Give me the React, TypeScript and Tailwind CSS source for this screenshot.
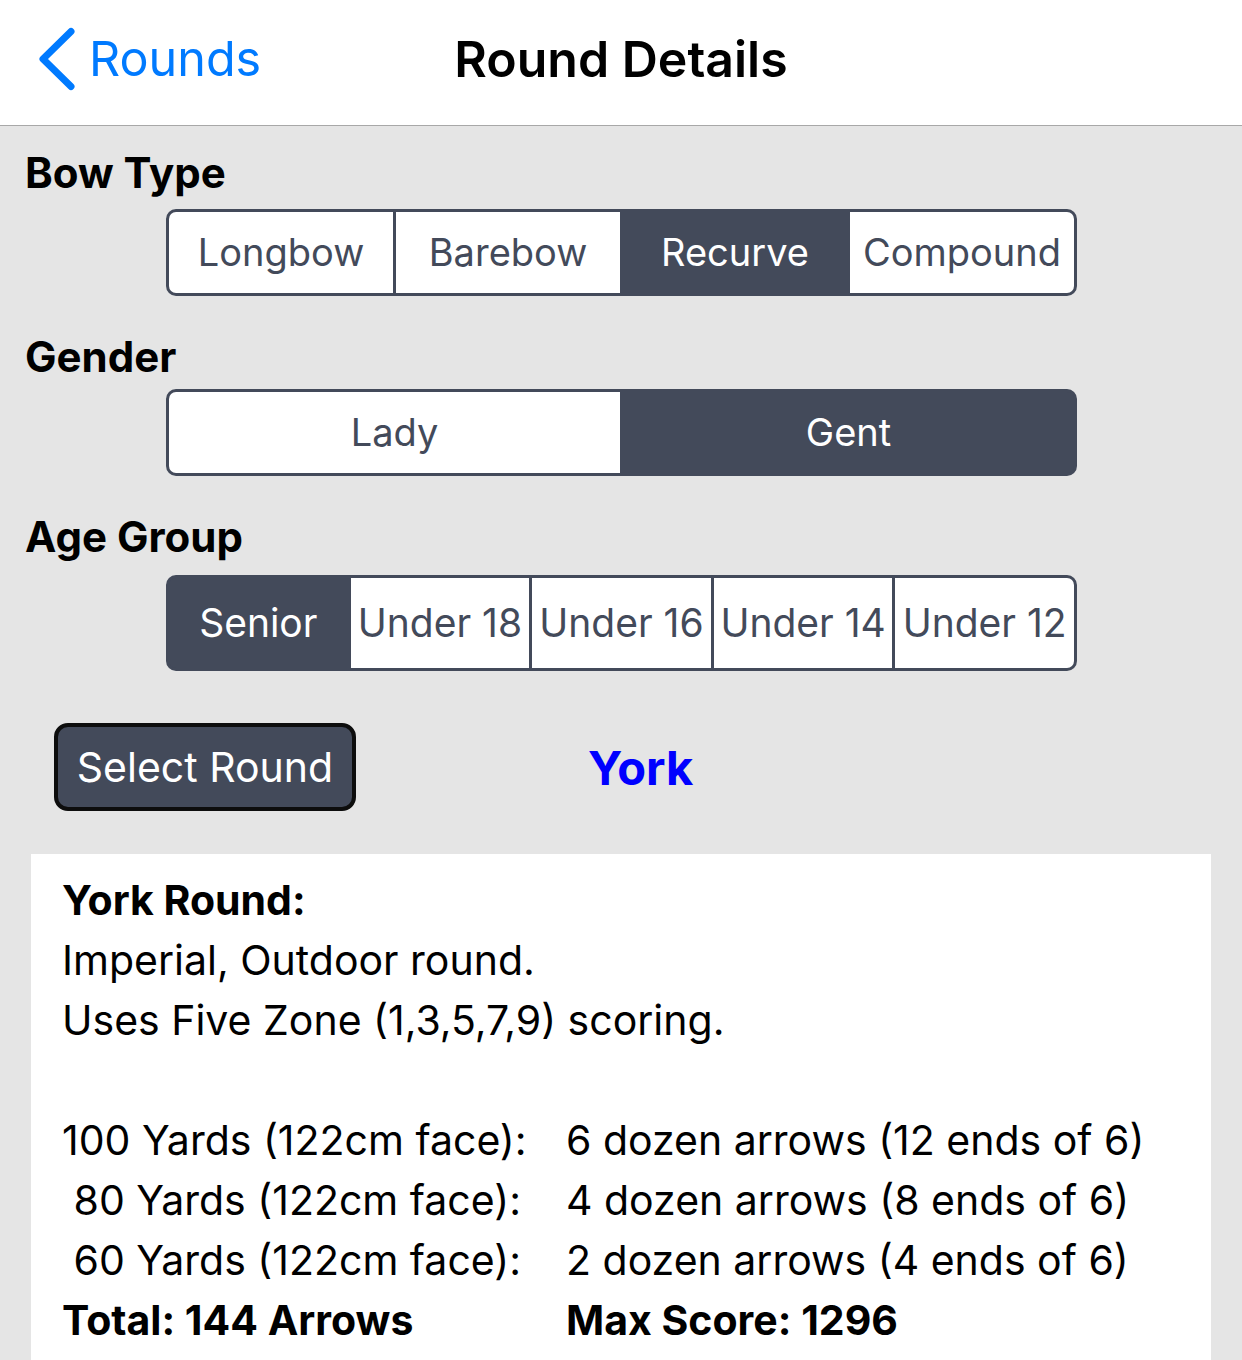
import React from "react";

function Segmented({
  items,
  selected,
  heightClass,
  textClass,
}: {
  items: string[];
  selected: number;
  heightClass: string;
  textClass: string;
}) {
  return (
    <div
      className={`ml-[166px] w-[911px] ${heightClass} flex rounded-[10px] border-[3px] border-[#434a5a] bg-[#434a5a] overflow-hidden`}
    >
      {items.map((it, i) => {
        const sel = i === selected;
        const isFirst = i === 0;
        return (
          <div
            key={it}
            className={`flex-1 flex items-center justify-center whitespace-nowrap ${textClass} ${
              isFirst ? "" : "border-l-[3px] border-[#434a5a]"
            } ${sel ? "bg-[#434a5a] text-white" : "bg-white text-[#434a5a]"}`}
          >
            {it}
          </div>
        );
      })}
    </div>
  );
}

export default function App() {
  return (
    <div
      className="w-[1242px] h-[1360px] overflow-hidden bg-[#e5e5e5] flex flex-col"
      style={{ fontFamily: "Inter, 'Liberation Sans', sans-serif" }}
    >
      {/* Nav bar */}
      <div className="h-[126px] shrink-0 bg-white border-b border-[#a8a8a8] grid grid-cols-[1fr_auto_1fr] items-center pb-[7px]">
        <div className="flex items-center pl-[36px]">
          <svg width="42" height="66" viewBox="0 0 42 66" className="shrink-0">
            <polyline
              points="35,5.5 7,33 35,60.5"
              fill="none"
              stroke="#007aff"
              strokeWidth="7"
              strokeLinecap="round"
              strokeLinejoin="round"
            />
          </svg>
          <span className="ml-[11px] text-[48.5px] leading-none text-[#007aff]">Rounds</span>
        </div>
        <div className="text-[50px] leading-none font-semibold text-black">
          Round Details
        </div>
        <div />
      </div>

      {/* Bow Type */}
      <div className="mt-[23px] pl-[25px] text-[42px] leading-[48px] font-bold text-black">
        Bow Type
      </div>
      <div className="mt-[12px]">
        <Segmented
          items={["Longbow", "Barebow", "Recurve", "Compound"]}
          selected={2}
          heightClass="h-[87px]"
          textClass="text-[38px]"
        />
      </div>

      {/* Gender */}
      <div className="mt-[37px] pl-[25px] text-[42px] leading-[48px] font-bold text-black">
        Gender
      </div>
      <div className="mt-[8px]">
        <Segmented
          items={["Lady", "Gent"]}
          selected={1}
          heightClass="h-[87px]"
          textClass="text-[38px]"
        />
      </div>

      {/* Age Group */}
      <div className="mt-[37px] pl-[25px] text-[42px] leading-[48px] font-bold text-black">
        Age Group
      </div>
      <div className="mt-[14px]">
        <Segmented
          items={["Senior", "Under 18", "Under 16", "Under 14", "Under 12"]}
          selected={0}
          heightClass="h-[96px]"
          textClass="text-[39px]"
        />
      </div>

      {/* Select round row */}
      <div className="mt-[52px] flex items-center h-[88px]">
        <div className="ml-[54px] w-[302px] h-[88px] rounded-[14px] border-[4px] border-[#0d0d0d] bg-[#434a5a] flex items-center justify-center text-white text-[41px] leading-none">
          Select Round
        </div>
        <div className="ml-[232px] text-[#0000ff] text-[47px] font-bold leading-none">
          York
        </div>
      </div>

      {/* Description card */}
      <div className="mt-[43px] ml-[31px] w-[1180px] flex-1 bg-white pt-[16px] pl-[31px] text-black text-[41px] leading-[60px]">
        <div className="font-bold">York Round:</div>
        <div>Imperial, Outdoor round.</div>
        <div>Uses Five Zone (1,3,5,7,9) scoring.</div>
        <div className="h-[60px]" />
        <div className="flex">
          <div className="w-[504px] whitespace-pre">100 Yards (122cm face):</div>
          <div>6 dozen arrows (12 ends of 6)</div>
        </div>
        <div className="flex">
          <div className="w-[504px] whitespace-pre"> 80 Yards (122cm face):</div>
          <div>4 dozen arrows (8 ends of 6)</div>
        </div>
        <div className="flex">
          <div className="w-[504px] whitespace-pre"> 60 Yards (122cm face):</div>
          <div>2 dozen arrows (4 ends of 6)</div>
        </div>
        <div className="flex font-bold">
          <div className="w-[504px]">Total: 144 Arrows</div>
          <div>Max Score: 1296</div>
        </div>
      </div>
    </div>
  );
}
